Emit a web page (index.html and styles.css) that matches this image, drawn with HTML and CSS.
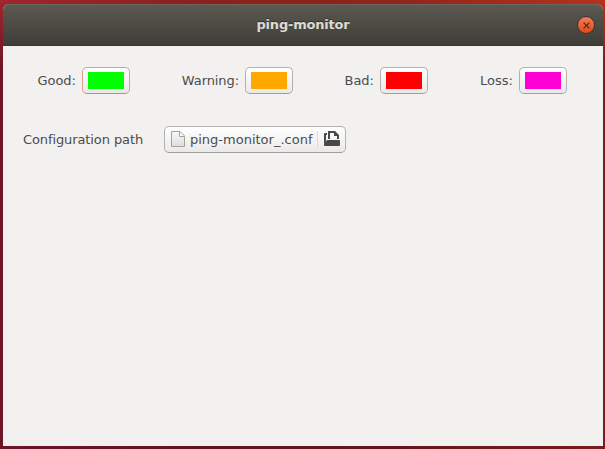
FILE: index.html
```html
<!DOCTYPE html>
<html lang="en">
<head>
<meta charset="utf-8">
<title>ping-monitor</title>
<link rel="stylesheet" href="styles.css">
</head>
<body>
<main class="window">
  <header class="titlebar">
    <h1 class="title">ping-monitor</h1>
    <button class="close" aria-label="Close">
      <svg width="7" height="7" viewBox="0 0 7 7"><path d="M.6 .6 6.4 6.4M6.4 .6 .6 6.4" fill="none" stroke="#4a2a18" stroke-width="1.2"/></svg>
    </button>
  </header>
  <section class="colors">
    <div class="field"><span>Good:</span><button class="button color focused" aria-label="Good"><span class="swatch good"></span></button></div>
    <div class="field"><span class="label-warning">Warning:</span><button class="button color" aria-label="Warning"><span class="swatch warning"></span></button></div>
    <div class="field"><span>Bad:</span><button class="button color" aria-label="Bad"><span class="swatch bad"></span></button></div>
    <div class="field"><span>Loss:</span><button class="button color" aria-label="Loss"><span class="swatch loss"></span></button></div>
  </section>
  <section class="config">
    <span class="config-label">Configuration path</span>
    <button class="button file">
      <svg class="document" width="14" height="16" viewBox="0 0 14 16">
        <defs><linearGradient id="paper" x2="0" y2="1"><stop stop-color="#f8f8f8"/><stop offset="1" stop-color="#dedede"/></linearGradient></defs>
        <path d="M.5 .5H9L13.5 5V15.5H.5Z" fill="url(#paper)" stroke="#a2a2a0"/>
        <path d="M8.5 1V5.5H13" fill="#fff" stroke="#a2a2a0"/>
      </svg>
      <span class="filename">ping-monitor_.conf</span>
      <span class="divider"></span>
      <svg class="open" width="17" height="16" viewBox="0 0 17 16">
        <path d="M1 2H3V4H2V10L0 13V3Q0 2 1 2Z" fill="#484846"/>
        <path d="M4 0H11L15 4V8H13V5H10V2H6V8H4Z" fill="#484846"/>
        <path d="M3.5 9H15Q16 9 16 10V14Q16 15 15 15H1Q0 15 0 14V12.5L2.4 9.8Q2.9 9 3.5 9Z" fill="#484846"/>
      </svg>
    </button>
  </section>
</main>
</body>
</html>
```
FILE: styles.css
```css
* { box-sizing: border-box; }

body {
  margin: 0;
  height: 449px;
  padding: 4px 2px 3px 3px;
  overflow: hidden;
  background:
    linear-gradient(to bottom, transparent 0, rgba(50, 0, 30, .45) 70px, rgba(50, 0, 30, .45) 100%),
    linear-gradient(to right, #a0262d, #8a211c 35%, #90251a 65%, #b5331d);
  font: 13px/16px "DejaVu Sans", sans-serif;
  color: #4c4c4c;
}

.window {
  height: 442px;
  background: #f2f1f0;
  border-radius: 6px 6px 0 0;
  overflow: hidden;
}

.titlebar {
  height: 42px;
  display: grid;
  grid-template-columns: 1fr auto 1fr;
  align-items: center;
  padding: 0 8px;
  background: linear-gradient(#5c5a51, #3d3c37);
  box-shadow: inset 0 1px #68665e, inset 0 -1px #383733;
}

.title {
  grid-column: 2;
  margin: 0;
  font-size: 13px;
  line-height: 16px;
  letter-spacing: -.2px;
  color: #dfdbd2;
  text-shadow: 0 -1px #32312d;
}

.close {
  justify-self: end;
  display: flex;
  align-items: center;
  justify-content: center;
  width: 18px;
  height: 18px;
  padding: 0;
  border: 1px solid #3b3630;
  border-radius: 50%;
  background: linear-gradient(#f47c57, #df4b19);
}

.colors {
  display: grid;
  grid-template-columns: 127px 163px 135px 139px;
  padding-top: 21px;
}

.field {
  display: flex;
  justify-content: flex-end;
  align-items: center;
  gap: 6px;
}

.label-warning { letter-spacing: -.08px; }

.button {
  display: flex;
  align-items: center;
  height: 27px;
  border: 1px solid #b3b1ae;
  border-bottom-color: #a09e9b;
  border-radius: 5px;
  background: linear-gradient(#fff, #ebe9e8);
  font: inherit;
  color: inherit;
}

.color {
  width: 48px;
  padding: 0 5px 1px;
}

.focused { border-color: #dda08a; border-bottom-color: #d3866b; }

.swatch { width: 36px; height: 17px; }
.good { background: #0f0; }
.warning { background: #ffa800; }
.bad { background: #f00; }
.loss { background: #ff00d4; }

.config {
  display: flex;
  align-items: center;
  margin-top: 32px;
  padding-left: 20px;
}

.config-label { width: 141px; letter-spacing: -.1px; }

.file {
  width: 182px;
  padding: 0 4px 0 6px;
}

.file svg { flex: none; }
.document, .open { margin-bottom: 1px; }

.filename { margin-left: 5px; white-space: nowrap; }

.divider {
  width: 1px;
  height: 17px;
  margin: 0 6px 0 auto;
  background: #dddbd9;
}
```
